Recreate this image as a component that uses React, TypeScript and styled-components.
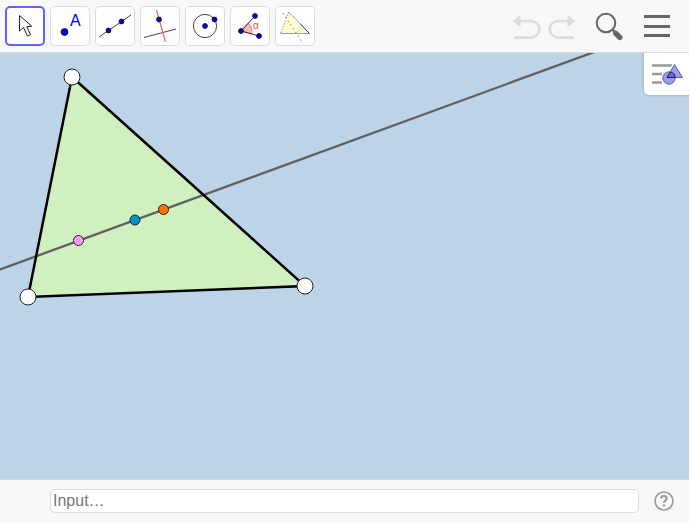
import React, { useState } from "react";
import styled, { createGlobalStyle } from "styled-components";

const GlobalStyle = createGlobalStyle`
  *, *::before, *::after { box-sizing: border-box; }
  body { margin: 0; background: #fff; font-family: "Liberation Sans", Arial, sans-serif; }
`;

const Page = styled.div`
  display: flex;
  flex-direction: column;
  height: 100vh;
  padding: 0 2px 1px 0;
`;

const Toolbar = styled.header`
  display: flex;
  justify-content: space-between;
  align-items: flex-start;
  padding: 6px 10px 6px 5px;
  background: #f8f8f8;
  border-bottom: 1px solid #d8d8d8;
`;

const ToolGroup = styled.div`
  display: flex;
  gap: 5px;
`;

const ToolButton = styled.button<{ $active: boolean }>`
  display: flex;
  align-items: center;
  justify-content: center;
  width: 40px;
  height: 40px;
  padding: 0;
  border: 0;
  border-radius: 5px;
  background: #fff;
  box-shadow: inset 0 0 0 ${(p) => (p.$active ? "2px #6161ff" : "1px #dcdcdc")};
  cursor: pointer;
`;

const ActionGroup = styled.div`
  display: flex;
  align-items: center;
`;

const ActionButton = styled.button<{ $width: number }>`
  display: flex;
  align-items: center;
  justify-content: center;
  width: ${(p) => p.$width}px;
  height: 40px;
  padding: 0;
  border: 0;
  background: transparent;
  cursor: pointer;
  &:disabled { cursor: default; }
`;

const Workspace = styled.main`
  position: relative;
  flex: 1;
  min-height: 0;
  overflow: hidden;
  background: #bdd3e7;
`;

const Construction = styled.svg`
  display: block;
  width: 100%;
  height: 100%;
`;

const StyleBarButton = styled.button`
  position: absolute;
  top: 0;
  right: 0;
  display: flex;
  align-items: center;
  justify-content: center;
  width: 45px;
  height: 42px;
  padding: 0;
  border: 0;
  border-radius: 0 0 0 5px;
  background: #fff;
  box-shadow: 0 0 2px 1px #a4b8ca;
  cursor: pointer;
`;

const InputBar = styled.footer`
  display: flex;
  align-items: center;
  gap: 14px;
  padding: 9px 14px 10px 50px;
  background: #f8f8f8;
  border-top: 1px solid #d8d8d8;
`;

const AlgebraInput = styled.input`
  flex: 1;
  min-width: 0;
  height: 24px;
  padding: 0 2px 1px;
  border: 1px solid #dcdcdc;
  border-radius: 5px;
  background: #fff;
  color: #333;
  font: 16px "Liberation Sans", Arial, sans-serif;
  &::placeholder { color: #757575; opacity: 1; }
`;

const HelpButton = styled.button`
  display: flex;
  padding: 0;
  border: 0;
  background: transparent;
  cursor: pointer;
`;

const Dot = ({ x, y, r = 2.4 }: { x: number; y: number; r?: number }) => (
  <circle cx={x} cy={y} r={r} fill="#0000f0" stroke="#111" strokeWidth="1" />
);

const tools: { name: string; icon: React.ReactNode }[] = [
  {
    name: "Move",
    icon: (
      <path
        d="M14.5 9.5V25l4-3.5 4 8.7 3-1.5-3.7-8 5-.5Z"
        fill="#fff"
        stroke="#222"
        strokeWidth="1"
      />
    ),
  },
  {
    name: "Point",
    icon: (
      <>
        <Dot x={14.5} y={26} r={3.4} />
        <text x="20" y="20" fontSize="16" fontFamily="Liberation Sans, sans-serif" fill="#0000ff">A</text>
      </>
    ),
  },
  {
    name: "Line",
    icon: (
      <>
        <path d="M4 31 36 9" stroke="#444" />
        <Dot x={13.5} y={24.5} />
        <Dot x={26.5} y={15.5} />
      </>
    ),
  },
  {
    name: "Perpendicular Line",
    icon: (
      <>
        <path d="M4 31.5 36 23" stroke="#444" />
        <path d="M16.5 4 25.5 36" stroke="#ff6659" strokeWidth="1.3" />
        <Dot x={19} y={13.5} />
      </>
    ),
  },
  {
    name: "Circle with Center through Point",
    icon: (
      <>
        <circle cx="20" cy="20" r="11.6" fill="none" stroke="#444" />
        <Dot x={20} y={20} />
        <Dot x={29.5} y={13.5} />
      </>
    ),
  },
  {
    name: "Angle",
    icon: (
      <>
        <path d="M11 25 18 17.3A11 11 0 0 1 21.7 27.7Z" fill="#ffb8b8" stroke="#e77" />
        <path d="M25 10 11 25l18 5" fill="none" stroke="#333" />
        <Dot x={25} y={10} />
        <Dot x={11} y={25} />
        <Dot x={29} y={30} />
        <text x="23" y="23" fontSize="10" fontFamily="Liberation Sans, sans-serif" fill="#ff4b3d">α</text>
      </>
    ),
  },
  {
    name: "Custom Tool",
    icon: (
      <>
        <path d="M13.5 6 5.5 27.5h29Z" fill="#ffffcc" />
        <path d="M13.5 6 5.5 27.5" stroke="#8888dd" strokeDasharray="1.5 1.5" />
        <path d="M5.5 27.5h29" stroke="#9999aa" />
        <path d="M13.5 6 25 17.5" stroke="#6666ee" strokeDasharray="2 1" />
        <path d="M25 17.5 34 27" stroke="#1111dd" />
        <path d="M8 7 27 36" stroke="#a060b0" strokeDasharray="1.5 3" />
        <path d="M34 27h1v1h-1Z" fill="#ff6600" />
      </>
    ),
  },
];

const vertices = [
  { x: 72, y: 24 },
  { x: 28, y: 244 },
  { x: 305, y: 233 },
];

const centers = [
  { x: 78.5, y: 187.5, color: "#ff99ff" },
  { x: 135, y: 167, color: "#0093c4" },
  { x: 163.5, y: 156.5, color: "#ff7300" },
];

export default function App() {
  const [active, setActive] = useState("Move");
  const [command, setCommand] = useState("");

  return (
    <Page>
      <GlobalStyle />
      <Toolbar>
        <ToolGroup>
          {tools.map((tool) => (
            <ToolButton
              key={tool.name}
              type="button"
              aria-label={tool.name}
              aria-pressed={active === tool.name}
              $active={active === tool.name}
              onClick={() => setActive(tool.name)}
            >
              <svg width="32" height="32" viewBox="4 4 32 32">{tool.icon}</svg>
            </ToolButton>
          ))}
        </ToolGroup>
        <ActionGroup>
          <ActionButton type="button" aria-label="Undo" disabled $width={38}>
            <svg width="32" height="32" viewBox="0 0 32 32" fill="none">
              <path d="M9 11h12a8.3 8.3 0 0 1 0 16.6H4" stroke="#dcdcdc" strokeWidth="2.6" />
              <path d="M2 11 10.5 5v12Z" fill="#dcdcdc" />
            </svg>
          </ActionButton>
          <ActionButton type="button" aria-label="Redo" disabled $width={36}>
            <svg width="32" height="32" viewBox="0 0 32 32" fill="none">
              <path d="M22 11H11a8.3 8.3 0 0 0 0 16.6H27" stroke="#dcdcdc" strokeWidth="2.6" />
              <path d="M29 11 20.5 5v12Z" fill="#dcdcdc" />
            </svg>
          </ActionButton>
          <ActionButton type="button" aria-label="Zoom" $width={54}>
            <svg width="32" height="32" viewBox="0 0 32 32" fill="none" stroke="#666">
              <circle cx="14" cy="13" r="9.3" strokeWidth="2" />
              <path d="m20.5 19.5 3 3" strokeWidth="2.4" />
              <path d="m23.8 23.3 4 4" strokeWidth="5.4" strokeLinecap="round" />
            </svg>
          </ActionButton>
          <ActionButton type="button" aria-label="Menu" $width={44}>
            <svg width="32" height="32" viewBox="0 0 32 32" fill="#666">
              <path d="M3 5h26v3H3zM3 15h26v3H3zM3 24h26v3H3z" />
            </svg>
          </ActionButton>
        </ActionGroup>
      </Toolbar>
      <Workspace>
        <Construction role="img" aria-label="Triangle with its Euler line">
          <polygon points={vertices.map((v) => `${v.x},${v.y}`).join(" ")} fill="#d0f0c0" />
          <line x1="-20" y1="223.8" x2="620" y2="-10.4" stroke="#606060" strokeWidth="2.3" />
          <polygon
            points={vertices.map((v) => `${v.x},${v.y}`).join(" ")}
            fill="none"
            stroke="#000"
            strokeWidth="2.5"
          />
          {vertices.map((v) => (
            <circle key={v.x} cx={v.x} cy={v.y} r="8" fill="#fff" stroke="#222" />
          ))}
          {centers.map((c) => (
            <circle key={c.color} cx={c.x} cy={c.y} r="5" fill={c.color} stroke="#222" />
          ))}
        </Construction>
        <StyleBarButton type="button" aria-label="Style bar">
          <svg width="32" height="32" viewBox="0 0 32 32">
            <path d="M1 7.5h20M1 16h10M1 24.5h10" stroke="#999" strokeWidth="2.4" />
            <path d="M23.5 6 16 19.3h16Z" fill="#fff" stroke="#fff" strokeWidth="3" />
            <circle cx="18" cy="20" r="7.5" fill="#fff" />
            <circle cx="18" cy="20" r="6.2" fill="#9999ff" stroke="#666" />
            <path d="M23.5 6.5 16 19.5h15.5Z" fill="#9999ff" stroke="#666" />
            <path d="M16 19.5 19.5 14a6 6 0 0 1 4.7 5.5Z" fill="#6464ff" stroke="#222" />
          </svg>
        </StyleBarButton>
      </Workspace>
      <InputBar>
        <AlgebraInput
          aria-label="Input"
          placeholder="Input…"
          value={command}
          onChange={(e) => setCommand(e.target.value)}
        />
        <HelpButton type="button" aria-label="Help">
          <svg width="22" height="22" viewBox="0 0 22 22" fill="none" stroke="#999">
            <circle cx="11" cy="11" r="9" strokeWidth="1.6" />
            <path d="M8.2 8.5C8.2 5.3 13.6 5.3 13.6 8.4c0 2-2.6 2.2-2.6 4.6" strokeWidth="2" />
            <path d="M11 14.4v2" strokeWidth="2.2" />
          </svg>
        </HelpButton>
      </InputBar>
    </Page>
  );
}
